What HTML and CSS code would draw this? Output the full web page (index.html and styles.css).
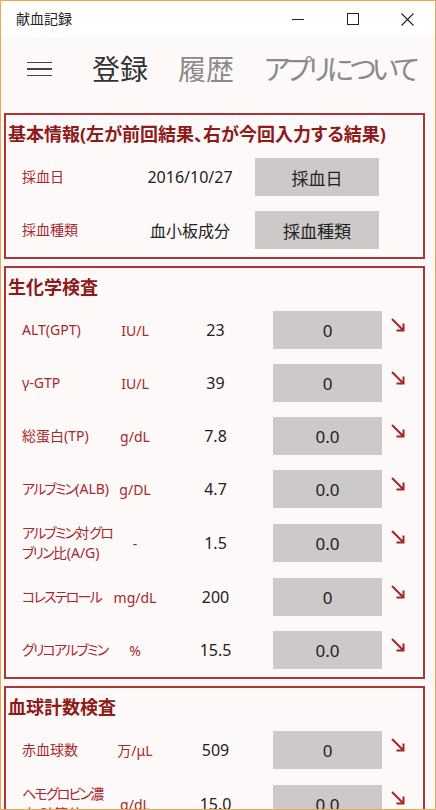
FILE: index.html
```html
<!DOCTYPE html>
<html lang="ja">
<head>
    <meta charset="UTF-8">
    <meta name="viewport" content="width=device-width, initial-scale=1.0">
    <title>献血記録</title>
    <link rel="stylesheet" href="styles.css">
</head>
<body>
    <div class="app-window">
        <!-- Window title bar -->
        <header class="title-bar">
            <span class="app-title">献血記録</span>
            <div class="caption-buttons">
                <span class="caption-button">
                    <svg width="12" height="12" viewBox="0 0 12 12"><path d="M0 6.5H12" stroke="#222" stroke-width="1" fill="none"/></svg>
                </span>
                <span class="caption-button">
                    <svg width="12" height="12" viewBox="0 0 12 12"><rect x="0.5" y="0.5" width="11" height="11" stroke="#222" stroke-width="1" fill="none"/></svg>
                </span>
                <span class="caption-button">
                    <svg width="13" height="13" viewBox="0 0 13 13"><path d="M0.5 0.5L12.5 12.5M12.5 0.5L0.5 12.5" stroke="#222" stroke-width="1.1" fill="none"/></svg>
                </span>
            </div>
        </header>

        <!-- Pivot navigation -->
        <nav class="pivot">
            <span class="hamburger">
                <span></span><span></span><span></span>
            </span>
            <div class="pivot-items">
                <span class="pivot-item active">登録</span>
                <span class="pivot-item">履歴</span>
                <span class="pivot-item kana">アプリについて</span>
            </div>
        </nav>

        <main class="content">
            <section class="group">
                <h2 class="group-title">基本情報(左が前回結果、右が今回入力する結果)</h2>
                <div class="info-row">
                    <span class="item-name">採血日</span>
                    <span class="item-value">2016/10/27</span>
                    <span class="input-button">採血日</span>
                </div>
                <div class="info-row">
                    <span class="item-name">採血種類</span>
                    <span class="item-value">血小板成分</span>
                    <span class="input-button">採血種類</span>
                </div>
            </section>

            <section class="group">
                <h2 class="group-title">生化学検査</h2>
                <div class="test-row">
                    <span class="item-name">ALT(GPT)</span>
                    <span class="item-unit">IU/L</span>
                    <span class="item-value">23</span>
                    <span class="input-box">0</span>
                    <svg class="trend-icon" width="16" height="16" viewBox="0 0 16 16"><path d="M2 2L13.5 13.5M6.5 13.5H13.5V6.5" stroke="#a8232b" stroke-width="2" fill="none"/></svg>
                </div>
                <div class="test-row">
                    <span class="item-name">γ-GTP</span>
                    <span class="item-unit">IU/L</span>
                    <span class="item-value">39</span>
                    <span class="input-box">0</span>
                    <svg class="trend-icon" width="16" height="16" viewBox="0 0 16 16"><path d="M2 2L13.5 13.5M6.5 13.5H13.5V6.5" stroke="#a8232b" stroke-width="2" fill="none"/></svg>
                </div>
                <div class="test-row">
                    <span class="item-name">総蛋白(TP)</span>
                    <span class="item-unit">g/dL</span>
                    <span class="item-value">7.8</span>
                    <span class="input-box">0.0</span>
                    <svg class="trend-icon" width="16" height="16" viewBox="0 0 16 16"><path d="M2 2L13.5 13.5M6.5 13.5H13.5V6.5" stroke="#a8232b" stroke-width="2" fill="none"/></svg>
                </div>
                <div class="test-row">
                    <span class="item-name"><span class="kana">アルブミン</span>(ALB)</span>
                    <span class="item-unit">g/DL</span>
                    <span class="item-value">4.7</span>
                    <span class="input-box">0.0</span>
                    <svg class="trend-icon" width="16" height="16" viewBox="0 0 16 16"><path d="M2 2L13.5 13.5M6.5 13.5H13.5V6.5" stroke="#a8232b" stroke-width="2" fill="none"/></svg>
                </div>
                <div class="test-row">
                    <span class="item-name"><span class="kana">アルブミン</span>対<span class="kana">グロ</span><br><span class="kana">ブリン</span>比(A/G)</span>
                    <span class="item-unit">-</span>
                    <span class="item-value">1.5</span>
                    <span class="input-box">0.0</span>
                    <svg class="trend-icon" width="16" height="16" viewBox="0 0 16 16"><path d="M2 2L13.5 13.5M6.5 13.5H13.5V6.5" stroke="#a8232b" stroke-width="2" fill="none"/></svg>
                </div>
                <div class="test-row">
                    <span class="item-name kana">コレステロール</span>
                    <span class="item-unit">mg/dL</span>
                    <span class="item-value">200</span>
                    <span class="input-box">0</span>
                    <svg class="trend-icon" width="16" height="16" viewBox="0 0 16 16"><path d="M2 2L13.5 13.5M6.5 13.5H13.5V6.5" stroke="#a8232b" stroke-width="2" fill="none"/></svg>
                </div>
                <div class="test-row">
                    <span class="item-name kana">グリコアルブミン</span>
                    <span class="item-unit">%</span>
                    <span class="item-value">15.5</span>
                    <span class="input-box">0.0</span>
                    <svg class="trend-icon" width="16" height="16" viewBox="0 0 16 16"><path d="M2 2L13.5 13.5M6.5 13.5H13.5V6.5" stroke="#a8232b" stroke-width="2" fill="none"/></svg>
                </div>
            </section>

            <section class="group">
                <h2 class="group-title">血球計数検査</h2>
                <div class="test-row">
                    <span class="item-name">赤血球数</span>
                    <span class="item-unit">万/μL</span>
                    <span class="item-value">509</span>
                    <span class="input-box">0</span>
                    <svg class="trend-icon" width="16" height="16" viewBox="0 0 16 16"><path d="M2 2L13.5 13.5M6.5 13.5H13.5V6.5" stroke="#a8232b" stroke-width="2" fill="none"/></svg>
                </div>
                <div class="test-row">
                    <span class="item-name"><span class="kana">ヘモグロビン</span>濃<br>度(計算値)</span>
                    <span class="item-unit">g/dL</span>
                    <span class="item-value">15.0</span>
                    <span class="input-box">0.0</span>
                    <svg class="trend-icon" width="16" height="16" viewBox="0 0 16 16"><path d="M2 2L13.5 13.5M6.5 13.5H13.5V6.5" stroke="#a8232b" stroke-width="2" fill="none"/></svg>
                </div>
            </section>
        </main>
    </div>
</body>
</html>
```

FILE: styles.css
```css
:root {
    --window-border: #f3a54c;
    --app-bg: #fdf9f8;
    --group-border: #a8363a;
    --title-red: #8e1a1a;
    --label-red: #a5282e;
    --text-dark: #222;
    --text-muted: #8a8a8a;
    --box-bg: #ccc9c8;
}

* {
    box-sizing: border-box;
}

html, body {
    margin: 0;
    padding: 0;
}

body {
    font-family: "Noto Sans", "Noto Sans CJK JP", sans-serif;
    font-feature-settings: "palt";
    color: var(--text-dark);
    background: var(--app-bg);
}

.app-window {
    width: 436px;
    height: 810px;
    border: 1px solid var(--window-border);
    background: var(--app-bg);
    overflow: hidden;
}

/* Title bar */
.title-bar {
    height: 36px;
    display: flex;
    align-items: center;
    justify-content: space-between;
    background: #fff;
    padding-left: 15px;
}

.app-title {
    font-size: 14px;
    line-height: 1;
    color: #222;
}

.caption-buttons {
    display: flex;
    height: 100%;
}

.caption-button {
    width: 55px;
    display: flex;
    align-items: center;
    justify-content: center;
}

/* Pivot navigation */
.pivot {
    height: 64px;
    display: flex;
    align-items: center;
    padding-left: 26px;
}

.hamburger {
    flex-shrink: 0;
    width: 25px;
    display: flex;
    flex-direction: column;
    gap: 5px;
    margin-right: 40px;
}

.hamburger span {
    height: 1.5px;
    background: #444;
}

.pivot-items {
    display: flex;
    gap: 30px;
    white-space: nowrap;
}

.pivot-item {
    font-size: 28px;
    line-height: 1;
    color: var(--text-muted);
}

.pivot-item.active {
    color: #333;
}

.pivot-item.kana {
    letter-spacing: -4px;
}

/* Groups */
.content {
    padding: 12px 10px 0 3px;
    display: flex;
    flex-direction: column;
    gap: 7px;
}

.group {
    border: 2px solid var(--group-border);
    padding: 8px 0 8px 0;
    display: flex;
    flex-direction: column;
    gap: 15px;
}

.group-title {
    margin: 0 0 -3px 0;
    padding-left: 2px;
    font-size: 18px;
    line-height: 23px;
    font-weight: 700;
    color: var(--title-red);
    white-space: nowrap;
}

.info-row,
.test-row {
    display: grid;
    align-items: center;
    padding-left: 16px;
    min-height: 38px;
}

.info-row {
    grid-template-columns: 103px 130px 124px;
}

.test-row {
    grid-template-columns: 90px 46px 115px 109px 1fr;
}

.item-name {
    font-size: 14px;
    line-height: 20px;
    color: var(--label-red);
    white-space: nowrap;
}

.kana {
    letter-spacing: -1.8px;
}

.item-unit {
    font-size: 14px;
    color: var(--label-red);
    text-align: center;
    white-space: nowrap;
}

.item-value {
    font-size: 16px;
    text-align: center;
    color: var(--text-dark);
}

.input-button,
.input-box {
    height: 38px;
    display: flex;
    align-items: center;
    justify-content: center;
    background: var(--box-bg);
    font-size: 17px;
    color: var(--text-dark);
}

.trend-icon {
    align-self: start;
    margin: 6px 0 0 8px;
}
```
